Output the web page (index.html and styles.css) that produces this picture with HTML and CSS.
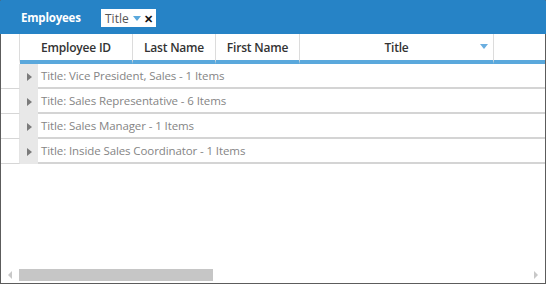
FILE: index.html
```html
<!DOCTYPE html>
<html lang="en">
<head>
  <meta charset="UTF-8">
  <title>Employees grid</title>
  <link rel="stylesheet" href="styles.css">
</head>
<body>

  <div class="grid">

    <div class="toolbar">
      <span class="grid-title">Employees</span>
      <span class="chip">
        Title
        <svg class="chip-arrow" width="8" height="5" viewBox="0 0 8 5"><path d="M0 0H8L4 5Z" fill="#5aa8dc"/></svg>
        <span class="chip-close">&#x2715;</span>
      </span>
    </div>

    <div class="head">
      <div class="cell indent"></div>
      <div class="cell col-id">Employee ID</div>
      <div class="cell col-last">Last Name</div>
      <div class="cell col-first">First Name</div>
      <div class="cell col-title">
        Title
        <svg class="sort-arrow" width="8" height="5" viewBox="0 0 8 5"><path d="M0 0H8L4 5Z" fill="#6aaee0"/></svg>
      </div>
      <div class="cell col-rest"></div>
    </div>

    <div class="groups">
      <div class="group">
        <div class="indent"></div>
        <div class="expander"><span class="tri"></span></div>
        <div class="group-text">Title: Vice President, Sales - 1 Items</div>
      </div>
      <div class="group">
        <div class="indent"></div>
        <div class="expander"><span class="tri"></span></div>
        <div class="group-text">Title: Sales Representative - 6 Items</div>
      </div>
      <div class="group">
        <div class="indent"></div>
        <div class="expander"><span class="tri"></span></div>
        <div class="group-text">Title: Sales Manager - 1 Items</div>
      </div>
      <div class="group">
        <div class="indent"></div>
        <div class="expander"><span class="tri"></span></div>
        <div class="group-text">Title: Inside Sales Coordinator - 1 Items</div>
      </div>
    </div>

    <div class="hscroll">
      <span class="arrow-left"></span>
      <div class="track"><div class="thumb"></div></div>
      <span class="arrow-right"></span>
    </div>

  </div>

</body>
</html>
```

FILE: styles.css
```css
body {
  margin: 0;
  font-family: 'Open Sans', 'Noto Sans', sans-serif;
}

.grid {
  width: 546px;
  height: 284px;
  box-sizing: border-box;
  border: 1px solid #5c5c5c;
  border-top-color: #2683c6;
  display: flex;
  flex-direction: column;
  background: #fff;
}

.toolbar {
  background-color: #2683c6;
  height: 33px;
  display: flex;
  align-items: center;
  padding-left: 21px;
  margin: 0 -1px;
  flex-shrink: 0;
}

.grid-title {
  color: #fff;
  font-weight: 700;
  font-size: 11.5px;
  letter-spacing: -0.2px;
  width: 80px;
}

.chip {
  background: #fff;
  height: 18px;
  padding: 0 3px 0 4px;
  display: flex;
  align-items: center;
  color: #555;
  font-size: 12px;
  margin-top: 1px;
}

.chip-arrow {
  margin: 1px 3px 0 4px;
}

.chip-close {
  color: #111;
  font-size: 11px;
  font-weight: 700;
}

.head {
  display: flex;
  height: 30px;
  flex-shrink: 0;
}

.head .cell {
  box-sizing: border-box;
  border-right: 1px solid #dcdcdc;
  border-bottom: 4px solid #5aa8dc;
  display: flex;
  align-items: center;
  justify-content: center;
  font-size: 12px;
  font-weight: 600;
  color: #333;
  letter-spacing: -0.2px;
}

.head .indent {
  width: 19px;
  border-bottom-color: #fff;
}

.col-id { width: 113px; }
.col-last { width: 83px; }
.col-first { width: 84px; }
.col-title { width: 194px; position: relative; }
.head .col-rest { flex: 1; border-right: none; }

.sort-arrow {
  position: absolute;
  right: 5px;
  top: 10px;
}

.group {
  display: flex;
  height: 25px;
}

.group .indent {
  width: 19px;
  border-right: 1px solid #e4e4e4;
  border-bottom: 1px solid #d6d6d6;
  box-sizing: border-box;
}

.expander {
  width: 18px;
  background: #e8e8e8;
  display: flex;
  align-items: center;
  justify-content: center;
}

.tri {
  width: 0;
  height: 0;
  border-top: 4px solid transparent;
  border-bottom: 4px solid transparent;
  border-left: 5px solid #7b7b7b;
  margin-left: 1px;
}

.group-text {
  flex: 1;
  box-sizing: border-box;
  border-bottom: 2px solid #d4d4d4;
  padding-left: 3px;
  display: flex;
  align-items: center;
  font-size: 11.5px;
  color: #858585;
  letter-spacing: -0.1px;
}

.groups {
  flex: 1;
}

.hscroll {
  height: 12px;
  display: flex;
  align-items: center;
  padding: 0 7px 2px 7px;
  flex-shrink: 0;
}

.track {
  flex: 1;
  height: 12px;
  margin: 0 6px 0 7px;
}

.thumb {
  width: 194px;
  height: 100%;
  background: #c6c6c6;
}

.arrow-left, .arrow-right {
  width: 0;
  height: 0;
  border-top: 4px solid transparent;
  border-bottom: 4px solid transparent;
}

.arrow-left { border-right: 4px solid #c8c8c8; }
.arrow-right { border-left: 4px solid #c8c8c8; }
```
